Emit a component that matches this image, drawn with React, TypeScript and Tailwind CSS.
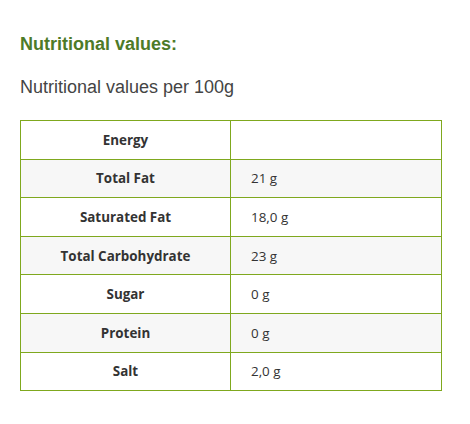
import React from "react";

const rows = [
  { name: "Energy", value: "" },
  { name: "Total Fat", value: "21 g" },
  { name: "Saturated Fat", value: "18,0 g" },
  { name: "Total Carbohydrate", value: "23 g" },
  { name: "Sugar", value: "0 g" },
  { name: "Protein", value: "0 g" },
  { name: "Salt", value: "2,0 g" },
];

export default function App() {
  return (
    <div className="w-[470px] h-[424px] bg-white px-5 pt-[34px]">
      <h2 className="text-[18px] font-bold leading-[20px] text-[#4d7a28] font-['Liberation_Sans',Arial,sans-serif]">
        Nutritional values:
      </h2>
      <p className="mt-[23px] text-[18px] leading-[20px] text-[#444] font-['Liberation_Sans',Arial,sans-serif]">
        Nutritional values per 100g
      </p>
      <table className="mt-[23px] w-[422px] border-collapse text-[13.4px] text-[#333] font-['Open_Sans','Noto_Sans',sans-serif]">
        <tbody>
          {rows.map((r, i) => (
            <tr key={r.name} className={i % 2 === 1 ? "bg-[#f7f7f7]" : "bg-white"}>
              <td className="w-[210px] h-[38.6px] border border-[#7fa81e] text-center font-bold">
                {r.name}
              </td>
              <td className="h-[38.6px] border border-[#7fa81e] pl-5">{r.value}</td>
            </tr>
          ))}
        </tbody>
      </table>
    </div>
  );
}
